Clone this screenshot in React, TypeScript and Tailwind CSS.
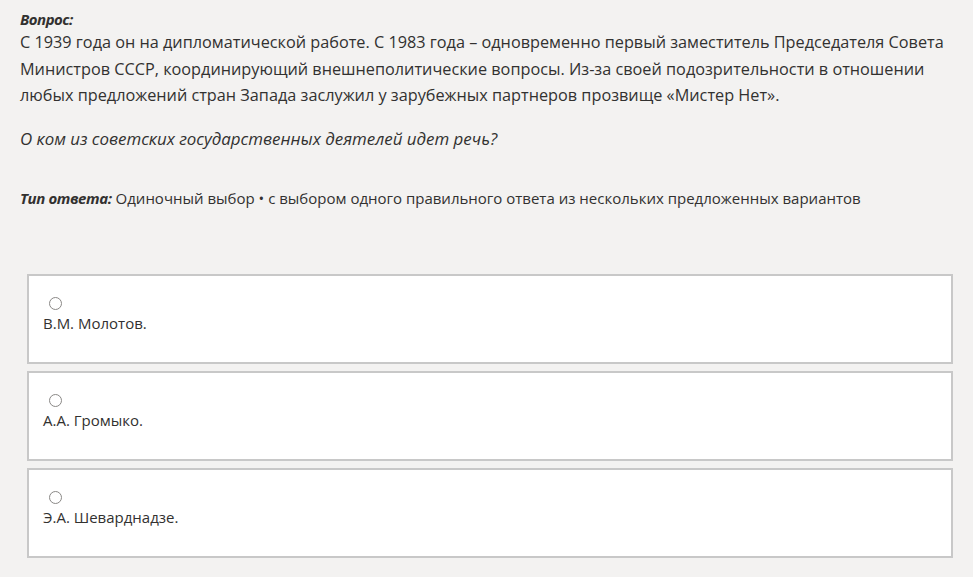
const options = ['В.М. Молотов.', 'А.А. Громыко.', 'Э.А. Шеварднадзе.'];

export default function App() {
  return (
    <div
      className="min-h-screen w-full bg-[#f3f2f1] text-[#323130] pl-[20px] pr-[20px] pt-[10px]"
      style={{ fontFamily: '"Open Sans", "Noto Sans", sans-serif' }}
    >
      {/* Question */}
      <div className="text-[15px] font-bold italic leading-[18px] tracking-[-0.5px]">Вопрос:</div>
      <p className="text-[16.25px] leading-[26.5px] mt-[1px]">
        С 1939 года он на дипломатической работе. С 1983 года – одновременно первый заместитель Председателя Совета
        <br />
        Министров СССР, координирующий внешнеполитические вопросы. Из-за своей подозрительности в отношении
        <br />
        любых предложений стран Запада заслужил у зарубежных партнеров прозвище «Мистер Нет».
      </p>
      <p className="text-[16.9px] italic leading-[26px] mt-[17px]">
        О ком из советских государственных деятелей идет речь?
      </p>

      {/* Answer type */}
      <p className="text-[15px] leading-[20px] mt-[36px]">
        <span className="font-bold italic tracking-[-0.4px]">Тип ответа:</span> Одиночный выбор • с выбором одного правильного ответа из нескольких предложенных вариантов
      </p>

      {/* Options */}
      <div className="flex flex-col gap-[7px] mt-[66px] ml-[7px] w-[926px]">
        {options.map((o) => (
          <div key={o} className="h-[90px] bg-white border-2 border-[#c8c8c8] pl-[14px] pt-[21px]">
            <div className="w-[13px] h-[13px] rounded-full border border-[#8a8886] bg-white ml-[6px]" />
            <div className="text-[15px] leading-[20px] mt-[3px]">{o}</div>
          </div>
        ))}
      </div>
    </div>
  );
}
